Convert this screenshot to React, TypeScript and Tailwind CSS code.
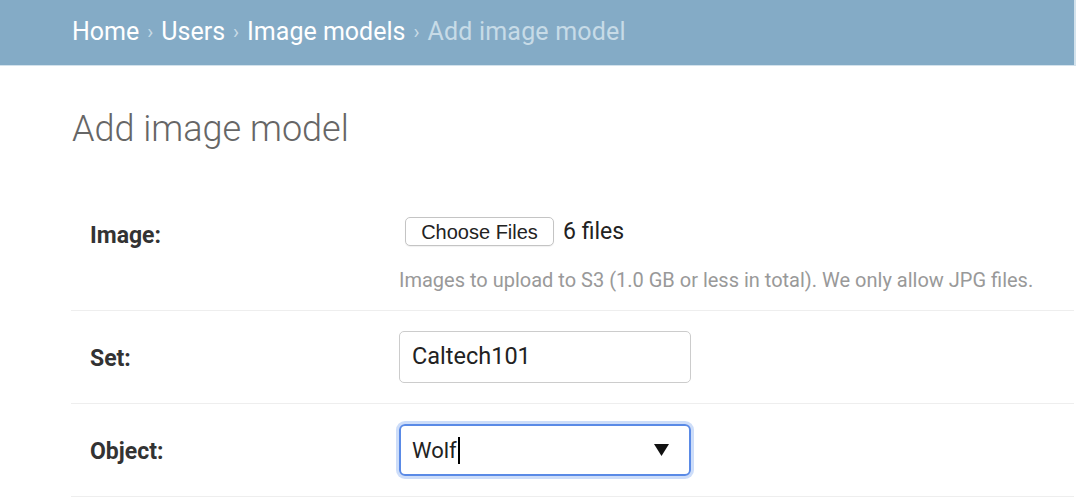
export default function App() {
  return (
    <div className="min-h-screen w-full bg-white font-['Roboto',sans-serif]">
      {/* breadcrumbs bar */}
      <div className="h-[66px] border-b border-r-2 border-[#d3e2ec] bg-[#84abc6] pl-[72px] flex items-center">
        <div className="text-[25px] leading-none text-white flex items-center gap-[8px] -mt-[2px]">
          <span>Home</span>
          <span className="text-[#c8dbe7] text-[20px]">›</span>
          <span>Users</span>
          <span className="text-[#c8dbe7] text-[20px]">›</span>
          <span>Image models</span>
          <span className="text-[#c8dbe7] text-[20px]">›</span>
          <span className="text-[#c7dbe7] tracking-[0.2px]">Add image model</span>
        </div>
      </div>

      <div className="pl-[71px] pr-[2px]">
        <h1 className="mt-[45px] pl-[1px] text-[36px] leading-none font-light text-[#666]">Add image model</h1>

        <div className="mt-[48px]">
          {/* Image row */}
          <div className="flex items-start border-b border-[#eee] pt-[22px] pb-[20px]">
            <label className="w-[328px] shrink-0 pl-[19px] mt-[4px] text-[23px] leading-[29px] font-bold text-[#333]">
              Image:
            </label>
            <div className="flex flex-col">
              <div className="flex items-center">
                <button className="ml-[6px] h-[29px] w-[149px] rounded-[5px] border border-[#c4c4c4] bg-white font-['Liberation_Sans',sans-serif] text-[20px] leading-none text-[#222] shadow-[0_1px_1px_rgba(0,0,0,0.06)]">
                  Choose Files
                </button>
                <span className="ml-[9px] text-[23px] leading-none text-[#222]">6 files</span>
              </div>
              <p className="mt-[24px] text-[20px] leading-[20px] text-[#999]">
                Images to upload to S3 (1.0 GB or less in total). We only allow JPG files.
              </p>
            </div>
          </div>

          {/* Set row */}
          <div className="flex items-start border-b border-[#eee] py-[20px]">
            <label className="h-[52px] w-[328px] shrink-0 pl-[19px] pt-[2px] text-[23px] leading-[52px] font-bold text-[#333]">Set:</label>
            <div className="h-[52px] w-[292px] rounded-[5px] border border-[#ccc] px-[12px] flex items-center text-[23.5px] text-[#222]">
              Caltech101
            </div>
          </div>

          {/* Object row */}
          <div className="flex items-start border-b border-[#eee] py-[20px]">
            <label className="h-[52px] w-[328px] shrink-0 pl-[19px] pt-[2px] text-[23px] leading-[52px] font-bold text-[#333]">Object:</label>
            <div className="h-[52px] w-[292px] rounded-[6px] border-2 border-[#5a8ae6] shadow-[0_0_0_3px_rgba(130,170,240,0.4)] pl-[11px] pr-[20px] flex items-center text-[22px] text-[#222]">
              <span>Wolf</span>
              <span className="ml-[1px] h-[27px] w-[2px] bg-black" />
              <svg className="ml-auto" width="15" height="12" viewBox="0 0 15 12">
                <polygon points="0,0 15,0 7.5,12" fill="#111" />
              </svg>
            </div>
          </div>
        </div>
      </div>
    </div>
  );
}
